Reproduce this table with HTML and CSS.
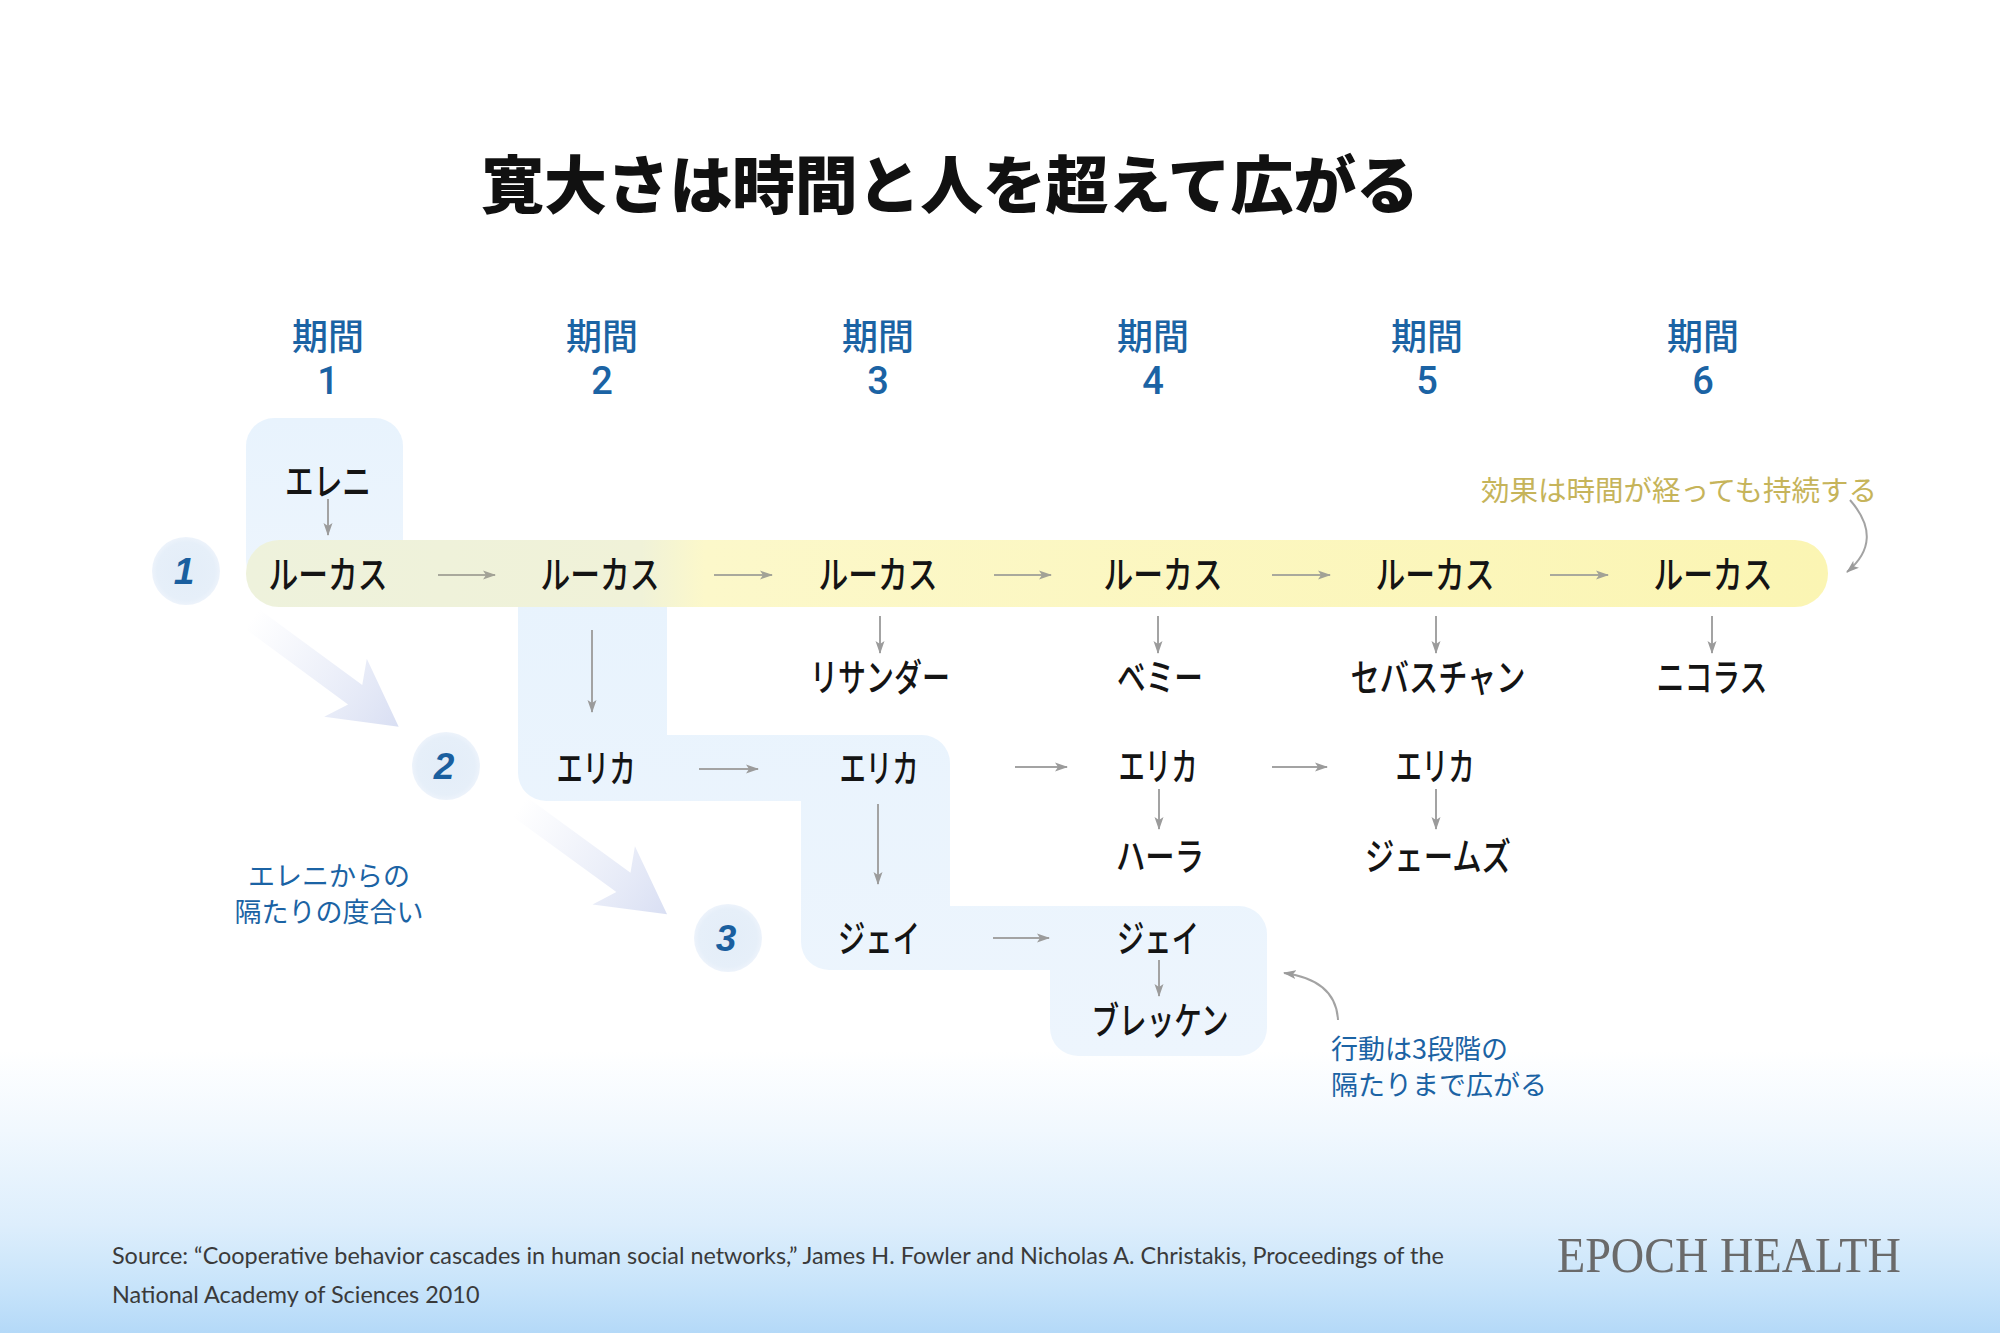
FILE: index.html
```html
<!DOCTYPE html>
<html lang="ja">
<head>
<meta charset="utf-8">
<title>寛大さは時間と人を超えて広がる</title>
<link rel="stylesheet" href="styles.css">
</head>
<body>
<div class="page">
  <h1 class="title">寛大さは時間と人を超えて広がる</h1>

  <svg class="diagram" width="2000" height="860" viewBox="0 250 2000 860" xmlns="http://www.w3.org/2000/svg">
    <defs>
      <linearGradient id="band" x1="0" y1="0" x2="1" y2="0">
        <stop offset="0" stop-color="#eef2dc"/>
        <stop offset="0.25" stop-color="#f0f2d8"/>
        <stop offset="0.29" stop-color="#fcf8ca"/>
        <stop offset="1" stop-color="#fbf5b3"/>
      </linearGradient>
      <linearGradient id="blue" x1="0" y1="0" x2="0" y2="1">
        <stop offset="0" stop-color="#e8f3fd"/>
        <stop offset="1" stop-color="#edf5fd"/>
      </linearGradient>
      <linearGradient id="fat" x1="0" y1="0" x2="1" y2="0">
        <stop offset="0" stop-color="#e2e7f6" stop-opacity="0"/>
        <stop offset="0.45" stop-color="#e2e7f6" stop-opacity="0.55"/>
        <stop offset="1" stop-color="#d9dff3"/>
      </linearGradient>
      <radialGradient id="disc" cx="0.5" cy="0.5" r="0.5">
        <stop offset="0" stop-color="#e3edf8"/>
        <stop offset="0.85" stop-color="#e6eff9"/>
        <stop offset="1" stop-color="#edf3fb"/>
      </radialGradient>
      <marker id="ah" markerWidth="13" markerHeight="10" refX="12" refY="5" orient="auto" markerUnits="userSpaceOnUse">
        <path d="M0,0.5 L13,5 L0,9.5 L3,5 Z" fill="#9b9b9b"/>
      </marker>
      <marker id="ahy" markerWidth="13" markerHeight="10" refX="12" refY="5" orient="auto" markerUnits="userSpaceOnUse">
        <path d="M0,0.5 L13,5 L0,9.5 L3,5 Z" fill="#a2a296"/>
      </marker>
    </defs>

    <!-- period headers -->
    <g class="period">
      <text x="328" y="334">期間</text>
      <text x="602" y="334">期間</text>
      <text x="878" y="334">期間</text>
      <text x="1153" y="334">期間</text>
      <text x="1427" y="334">期間</text>
      <text x="1703" y="334">期間</text>
    </g>
    <g class="period-num">
      <text x="328" y="381">1</text>
      <text x="602" y="381">2</text>
      <text x="878" y="381">3</text>
      <text x="1153" y="381">4</text>
      <text x="1427" y="381">5</text>
      <text x="1703" y="381">6</text>
    </g>

    <!-- light blue degree-of-separation regions -->
    <rect x="246" y="418" width="157" height="170" rx="28" fill="url(#blue)"/>
    <path fill="url(#blue)" d="M518,590 H667 V735 H922 A28,28 0 0 1 950,763 V906 H1239 A28,28 0 0 1 1267,934 V1028 A28,28 0 0 1 1239,1056 H1078 A28,28 0 0 1 1050,1028 V970 H829 A28,28 0 0 1 801,942 V801 H546 A28,28 0 0 1 518,773 Z"/>

    <!-- yellow persistence band -->
    <rect x="246" y="540" width="1582" height="67" rx="33" fill="url(#band)"/>

    <!-- wide diagonal arrows -->
    <g transform="translate(252,619) rotate(36.3)">
      <path fill="url(#fat)" d="M0,-12 L128,-12 L116,-36 L182,0 L116,36 L128,12 L0,12 Z"/>
    </g>
    <g transform="translate(520,807) rotate(36.1)">
      <path fill="url(#fat)" d="M0,-12 L128,-12 L116,-36 L182,0 L116,36 L128,12 L0,12 Z"/>
    </g>

    <!-- degree circles -->
    <circle cx="186" cy="571" r="34" fill="url(#disc)"/>
    <circle cx="446" cy="766" r="34" fill="url(#disc)"/>
    <circle cx="728" cy="938" r="34" fill="url(#disc)"/>
    <g class="degree">
      <text x="184" y="571">1</text>
      <text x="444" y="766">2</text>
      <text x="726" y="938">3</text>
    </g>

    <!-- small arrows -->
    <g class="link-y">
      <line x1="438" y1="575" x2="495" y2="575"/>
      <line x1="714" y1="575" x2="772" y2="575"/>
      <line x1="994" y1="575" x2="1051" y2="575"/>
      <line x1="1272" y1="575" x2="1330" y2="575"/>
      <line x1="1550" y1="575" x2="1608" y2="575"/>
    </g>
    <g class="link">
      <line x1="328" y1="499" x2="328" y2="535"/>
      <line x1="880" y1="616" x2="880" y2="653"/>
      <line x1="1158" y1="616" x2="1158" y2="653"/>
      <line x1="1436" y1="616" x2="1436" y2="653"/>
      <line x1="1712" y1="616" x2="1712" y2="653"/>
      <line x1="592" y1="630" x2="592" y2="712"/>
      <line x1="699" y1="769" x2="758" y2="769"/>
      <line x1="1015" y1="767" x2="1067" y2="767"/>
      <line x1="1272" y1="767" x2="1327" y2="767"/>
      <line x1="878" y1="804" x2="878" y2="884"/>
      <line x1="1159" y1="789" x2="1159" y2="829"/>
      <line x1="1436" y1="789" x2="1436" y2="829"/>
      <line x1="993" y1="938" x2="1049" y2="938"/>
      <line x1="1159" y1="960" x2="1159" y2="996"/>
      <path d="M1850,500 Q1885,540 1847,572"/>
      <path d="M1338,1020 Q1336,980 1284,973"/>
    </g>

    <!-- people -->
    <g class="name">
      <text x="328" y="478" textLength="86" lengthAdjust="spacingAndGlyphs">エレニ</text>
      <text x="328" y="571" textLength="119" lengthAdjust="spacingAndGlyphs">ルーカス</text>
      <text x="600" y="571" textLength="119" lengthAdjust="spacingAndGlyphs">ルーカス</text>
      <text x="878" y="571" textLength="119" lengthAdjust="spacingAndGlyphs">ルーカス</text>
      <text x="1163" y="571" textLength="119" lengthAdjust="spacingAndGlyphs">ルーカス</text>
      <text x="1435" y="571" textLength="119" lengthAdjust="spacingAndGlyphs">ルーカス</text>
      <text x="1713" y="571" textLength="119" lengthAdjust="spacingAndGlyphs">ルーカス</text>

      <text x="880" y="674" textLength="140" lengthAdjust="spacingAndGlyphs">リサンダー</text>
      <text x="1160" y="674" textLength="86" lengthAdjust="spacingAndGlyphs">ベミー</text>
      <text x="1438" y="674" textLength="175" lengthAdjust="spacingAndGlyphs">セバスチャン</text>
      <text x="1712" y="674" textLength="111" lengthAdjust="spacingAndGlyphs">ニコラス</text>

      <text x="596" y="765" textLength="79" lengthAdjust="spacingAndGlyphs">エリカ</text>
      <text x="879" y="765" textLength="79" lengthAdjust="spacingAndGlyphs">エリカ</text>
      <text x="1158" y="763" textLength="79" lengthAdjust="spacingAndGlyphs">エリカ</text>
      <text x="1435" y="763" textLength="79" lengthAdjust="spacingAndGlyphs">エリカ</text>

      <text x="1160" y="853" textLength="88" lengthAdjust="spacingAndGlyphs">ハーラ</text>
      <text x="1438" y="853" textLength="146" lengthAdjust="spacingAndGlyphs">ジェームズ</text>

      <text x="879" y="935" textLength="82" lengthAdjust="spacingAndGlyphs">ジェイ</text>
      <text x="1158" y="935" textLength="82" lengthAdjust="spacingAndGlyphs">ジェイ</text>
      <text x="1160" y="1017" textLength="137" lengthAdjust="spacingAndGlyphs">ブレッケン</text>
    </g>

    <!-- annotations -->
    <text class="note-gold" x="1679" y="488">効果は時間が経っても持続する</text>
    <g class="note-blue centered">
      <text x="329" y="874">エレニからの</text>
      <text x="329" y="910">隔たりの度合い</text>
    </g>
    <g class="note-blue">
      <text x="1331" y="1047">行動は3段階の</text>
      <text x="1331" y="1083">隔たりまで広がる</text>
    </g>
  </svg>

  <footer class="footer">
    <p class="source">Source: “Cooperative behavior cascades in human social networks,” James H. Fowler and Nicholas A. Christakis, Proceedings of the<br>National Academy of Sciences 2010</p>
    <div class="logo">EPOCH HEALTH</div>
  </footer>
</div>
</body>
</html>
```

FILE: styles.css
```css
html, body {
  margin: 0;
  padding: 0;
}

body {
  width: 2000px;
  height: 1333px;
  overflow: hidden;
  font-family: "Noto Sans CJK JP", "Noto Sans", sans-serif;
}

.page {
  width: 2000px;
  height: 1333px;
  display: flex;
  flex-direction: column;
  background: linear-gradient(180deg, #ffffff 0px, #ffffff 1050px, #f1f8fe 1130px, #ddeefc 1225px, #c6e3fa 1290px, #b4d9f8 1333px);
}

.title {
  margin: 0;
  height: 250px;
  flex: none;
  box-sizing: border-box;
  padding: 141px 100px 0 0;
  text-align: center;
  font-family: "Noto Sans CJK JP", sans-serif;
  font-weight: 900;
  font-size: 63px;
  line-height: 80px;
  color: #111111;
  letter-spacing: -0.3px;
}

.diagram {
  display: block;
  flex: none;
}

.period text {
  font-family: "Noto Sans CJK JP", sans-serif;
  font-size: 36px;
  font-weight: 500;
  fill: #1b63a4;
  text-anchor: middle;
  dominant-baseline: central;
}

.period-num text {
  font-family: "Roboto", "Liberation Sans", sans-serif;
  font-size: 38px;
  font-weight: 500;
  fill: #1b63a4;
  text-anchor: middle;
  dominant-baseline: central;
}

.degree text {
  font-family: "Liberation Sans", sans-serif;
  font-size: 37px;
  font-weight: 700;
  font-style: italic;
  fill: #1a5f9f;
  text-anchor: middle;
  dominant-baseline: central;
}

.link line,
.link path {
  stroke: #a3a3a3;
  stroke-width: 2;
  fill: none;
  marker-end: url(#ah);
}

.link-y line {
  stroke: #a9a99c;
  stroke-width: 2;
  fill: none;
  marker-end: url(#ahy);
}

.name text {
  font-family: "Noto Sans CJK JP", sans-serif;
  font-size: 38px;
  font-weight: 500;
  fill: #141414;
  text-anchor: middle;
  dominant-baseline: central;
}

.note-gold {
  font-family: "Noto Sans CJK JP", sans-serif;
  font-size: 28.5px;
  font-weight: 400;
  fill: #c6b45a;
  text-anchor: middle;
  dominant-baseline: central;
}

.note-blue text {
  font-family: "Noto Sans CJK JP", sans-serif;
  font-size: 27px;
  font-weight: 400;
  fill: #1b63a4;
  dominant-baseline: central;
}

.note-blue.centered text {
  text-anchor: middle;
}

.footer {
  flex: 1;
  display: flex;
  justify-content: space-between;
  align-items: flex-start;
  box-sizing: border-box;
  padding: 126px 99px 0 112px;
}

.source {
  margin: 0;
  font-family: "Lato", "Liberation Sans", sans-serif;
  font-size: 23.4px;
  line-height: 39px;
  color: #3a3a3a;
}

.logo {
  font-family: "Liberation Serif", serif;
  font-size: 50px;
  line-height: 39px;
  color: #6a6a6a;
  white-space: nowrap;
  transform: scaleX(0.925);
  transform-origin: right center;
}
```
